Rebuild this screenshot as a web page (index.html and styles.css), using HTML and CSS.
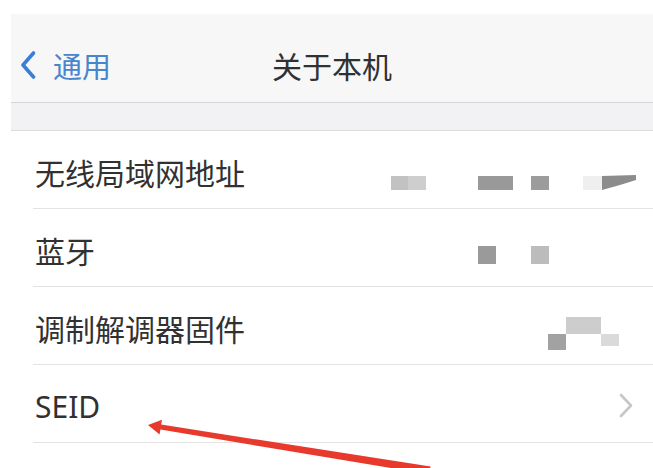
FILE: index.html
```html
<!DOCTYPE html>
<html lang="zh-CN">
<head>
<meta charset="UTF-8">
<meta name="viewport" content="width=device-width, initial-scale=1.0">
<title>关于本机</title>
<link rel="stylesheet" href="styles.css">
</head>
<body>

<div class="screen">
  <header class="nav">
    <a class="nav-back" href="#">
      <svg class="back-icon" width="16" height="28" viewBox="0 0 16 28">
        <polyline points="13.5,2 3,14 13.5,26" fill="none" stroke="#3a7fd5" stroke-width="3.6" stroke-linecap="round" stroke-linejoin="round"/>
      </svg>
      <span>通用</span>
    </a>
    <div class="nav-title">关于本机</div>
    <div class="nav-spacer"></div>
  </header>

  <div class="group-gap"></div>

  <ul class="list">
    <li class="row">
      <span class="label">无线局域网地址</span>
      <svg class="mosaic" width="260" height="77" viewBox="0 0 260 77">
        <rect x="11" y="45" width="17" height="14" fill="#c2c2c2"/>
        <rect x="28" y="45" width="18" height="14" fill="#cecece"/>
        <rect x="98" y="45" width="35" height="14" fill="#999"/>
        <rect x="151" y="45" width="18" height="14" fill="#9c9c9c"/>
        <rect x="203" y="45" width="19" height="14" fill="#efefef"/>
        <polygon points="222,45 256,44 256,49 240,54 222,59" fill="#8c8c8c"/>
      </svg>
    </li>
    <li class="row">
      <span class="label">蓝牙</span>
      <svg class="mosaic" width="260" height="77" viewBox="0 0 260 77">
        <rect x="98" y="37" width="18" height="18" fill="#9a9a9a"/>
        <rect x="151" y="37" width="18" height="18" fill="#bcbcbc"/>
      </svg>
    </li>
    <li class="row">
      <span class="label">调制解调器固件</span>
      <svg class="mosaic" width="260" height="77" viewBox="0 0 260 77">
        <rect x="186" y="30" width="35" height="17" fill="#cdcdcd"/>
        <rect x="168" y="47" width="18" height="16" fill="#a2a2a2"/>
        <rect x="221" y="47" width="18" height="12" fill="#dadada"/>
      </svg>
    </li>
    <li class="row">
      <span class="label">SEID</span>
      <svg class="chevron" width="20" height="28" viewBox="0 0 20 28">
        <polyline points="5,3 15,13.5 5,24" fill="none" stroke="#c6c6cb" stroke-width="2.6" stroke-linecap="round" stroke-linejoin="round"/>
      </svg>
    </li>
    <li class="row"></li>
  </ul>

  <!-- annotation arrow drawn over the list -->
  <svg class="arrow" width="653" height="468" viewBox="0 0 653 468">
    <polygon points="148,425 162,419.7 161.2,424.6 430.6,466.6 429.4,474.4 160.4,429.6 159.6,434.5" fill="#e83a2c"/>
  </svg>
</div>

</body>
</html>
```

FILE: styles.css
```css
body {
  margin: 0;
  background-color: #ffffff;
  font-family: "Noto Sans", "Noto Sans CJK SC", sans-serif;
  color: #313131;
}

.screen {
  position: relative;
  width: 653px;
  height: 468px;
  overflow: hidden;
  padding-top: 14px;
  box-sizing: border-box;
}

.nav {
  margin-left: 11px;
  height: 89px;
  padding-top: 14px;
  box-sizing: border-box;
  background-color: #f7f7f8;
  border-bottom: 1px solid #d6d6da;
  display: grid;
  grid-template-columns: 1fr auto 1fr;
  align-items: center;
}

.nav-back {
  display: flex;
  align-items: center;
  gap: 17px;
  padding-left: 9px;
  color: #4785cc;
  font-size: 29px;
  text-decoration: none;
}

.back-icon {
  flex-shrink: 0;
}

.nav-title {
  font-size: 30px;
  color: #313131;
}

.group-gap {
  margin-left: 11px;
  height: 27px;
  background-color: #f2f2f4;
  border-bottom: 1px solid #dcdcdf;
}

.list {
  list-style: none;
  margin: 0;
  padding: 0;
}

.row {
  margin-left: 33px;
  height: 77px;
  padding: 0 13px 0 2px;
  border-bottom: 1px solid #e3e3e3;
  display: flex;
  justify-content: space-between;
  align-items: center;
}

.label {
  font-size: 30px;
  padding-top: 5px;
}

.mosaic {
  flex-shrink: 0;
  filter: blur(0.6px);
}

.chevron {
  flex-shrink: 0;
  margin-right: 4px;
  margin-top: 4px;
}

.arrow {
  position: absolute;
  top: 0;
  left: 0;
  pointer-events: none;
}
```
